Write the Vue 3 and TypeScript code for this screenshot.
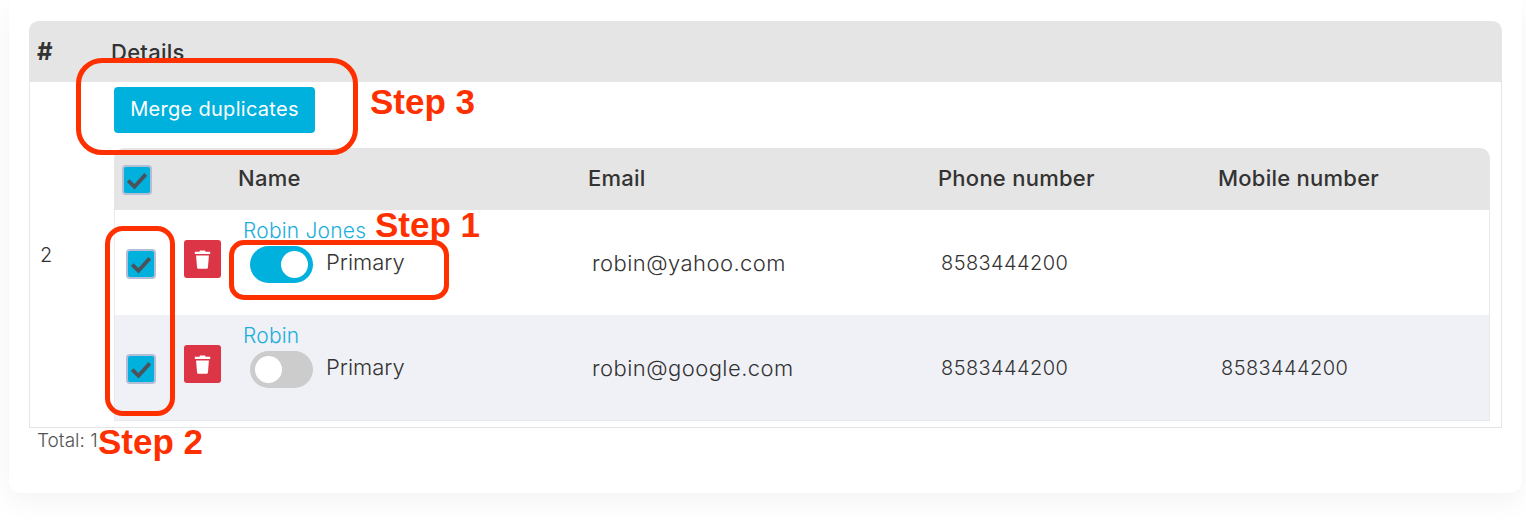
<template>
  <div class="page">
    <div class="card">
      <div class="outer">
        <div class="outer-head">
          <span class="col-no">#</span>
          <span class="col-details">Details</span>
        </div>
        <div class="outer-body">
          <div class="row-no">2</div>
          <div class="details">
            <div class="actions">
              <button class="merge" type="button">Merge duplicates</button>
            </div>
            <div class="inner-head inner-grid">
              <div class="head-check"><span class="check"><svg viewBox="0 0 24 24"><path d="M5 12.500l5 5 9-10" /></svg></span></div>
              <div>Name</div>
              <div>Email</div>
              <div>Phone number</div>
              <div>Mobile number</div>
            </div>
            <div v-for="c in contacts" :key="c.email" class="inner-row inner-grid" :class="{ alt: !c.primary }">
              <div class="row-tools">
                <span class="check"><svg viewBox="0 0 24 24"><path d="M5 12.500l5 5 9-10" /></svg></span>
                <button class="del" type="button" aria-label="Delete">
                  <svg viewBox="0 0 24 24"><path d="M9.500 2.500h5l.8 1.500H20v2.200H4V4h4.700zM5.300 7.700h13.400l-1 12.300c-.1 1-.8 1.600-1.700 1.600H8c-.9 0-1.600-.6-1.700-1.600z" /></svg>
                </button>
              </div>
              <div class="name-cell">
                <a class="name" href="#">{{ c.name }}</a>
                <div class="primary">
                  <span class="toggle" :class="{ on: c.primary }"><i></i></span>
                  <span>Primary</span>
                </div>
              </div>
              <div class="val">{{ c.email }}</div>
              <div class="val num">{{ c.phone }}</div>
              <div class="val num">{{ c.mobile }}</div>
            </div>
          </div>
        </div>
      </div>
      <div class="total">Total: 1</div>
    </div>

    <div class="mark mark-3"></div>
    <div class="mark mark-1"></div>
    <div class="mark mark-2"></div>
    <span class="step step-3">Step 3</span>
    <span class="step step-1">Step 1</span>
    <span class="step step-2">Step 2</span>
  </div>
</template>

<script setup lang="ts">
interface Contact {
  name: string
  email: string
  phone: string
  mobile: string
  primary: boolean
}

const contacts: Contact[] = [
  { name: 'Robin Jones', email: 'robin@yahoo.com', phone: '8583444200', mobile: '', primary: true },
  { name: 'Robin', email: 'robin@google.com', phone: '8583444200', mobile: '8583444200', primary: false },
]
</script>

<style>
html,
body {
  background: #fff;
  overflow: hidden;
}
</style>

<style scoped>
.page {
  position: relative;
  height: 527px;
  overflow: hidden;
  font-family: Inter, "Noto Sans", sans-serif;
  color: #333;
}

.card {
  margin: 0 4px 0 9px;
  height: 493px;
  padding: 21px 20px 0;
  box-sizing: border-box;
  background: #fff;
  border-radius: 0 0 12px 12px;
  box-shadow: 0 8px 28px rgba(0, 0, 0, 0.05);
}

.outer {
  border: 1px solid #e5e5e5;
  border-top: 0;
  border-radius: 10px 10px 0 0;
  height: 407px;
  box-sizing: border-box;
  display: flex;
  flex-direction: column;
}

.outer-head {
  height: 61px;
  margin: 0 -1px;
  background: #e5e5e5;
  border-radius: 10px 10px 0 0;
  display: flex;
  align-items: center;
  font-size: 22px;
  letter-spacing: 0.25px;
  font-weight: 500;
  flex: none;
}

.col-no {
  width: 82px;
  padding-left: 8px;
  box-sizing: border-box;
  font-size: 24px;
  font-weight: 700;
}

.outer-body {
  flex: 1;
  display: flex;
}

.row-no {
  width: 84px;
  flex: none;
  padding-left: 10px;
  box-sizing: border-box;
  align-self: center;
  font-size: 20px;
  font-weight: 300;
}

.details {
  flex: 1;
  margin-right: 11px;
}

.actions {
  height: 66px;
  padding-top: 5px;
  box-sizing: border-box;
}

.merge {
  width: 201px;
  height: 46px;
  border: 0;
  border-radius: 4px;
  background: #00b1dd;
  color: #fff;
  font: 400 20px/44px Inter, "Noto Sans", sans-serif;
  letter-spacing: 0.3px;
  white-space: nowrap;
  padding: 0 0 2px;
}

.inner-grid {
  display: grid;
  grid-template-columns: 124px 350px 350px 280px 1fr;
  align-items: center;
}

.inner-head {
  height: 62px;
  padding-bottom: 2px;
  box-sizing: border-box;
  background: #e5e5e5;
  border-radius: 10px 10px 0 0;
  font-size: 22px;
  letter-spacing: 0.25px;
  font-weight: 500;
}

.head-check {
  padding-left: 8px;
  margin-top: 4px;
  display: flex;
}

.inner-row {
  height: 105px;
  border: 1px solid #e9e9e9;
  border-width: 0 1px;
  box-sizing: border-box;
}

.inner-row.alt {
  height: 106px;
  background: #f0f1f7;
  border-bottom-width: 1px;
}

.check {
  width: 30px;
  height: 30px;
  box-sizing: border-box;
  border: 2px solid #b4bdd6;
  border-radius: 4px;
  background: #00b1dd;
  display: flex;
  align-items: center;
  justify-content: center;
}

.check svg {
  width: 30px;
  height: 30px;
  flex: none;
}

.check path {
  fill: none;
  stroke: #4d5159;
  stroke-width: 3;
}

.row-tools {
  display: flex;
  align-items: center;
  gap: 28px;
  padding-left: 11px;
  margin-top: 2px;
}

.del {
  width: 37px;
  height: 38px;
  margin-top: -9px;
  border: 0;
  border-radius: 3px;
  background: #dc3545;
  padding: 0;
  display: flex;
  align-items: center;
  justify-content: center;
}

.del svg {
  width: 23px;
  height: 23px;
  fill: #fff;
}

.name-cell {
  align-self: start;
  padding: 9px 0 0 4px;
}

.name {
  display: block;
  height: 27px;
  line-height: 24px;
  color: #1eaedb;
  font-size: 21px;
  letter-spacing: 0.2px;
  font-weight: 300;
  text-decoration: none;
}

.primary {
  display: flex;
  align-items: flex-start;
  gap: 13px;
  padding-left: 7px;
  font-size: 22px;
  font-weight: 300;
  line-height: 32px;
}

.toggle {
  width: 63px;
  height: 37px;
  border-radius: 19px;
  background: #ccc;
  position: relative;
  flex: none;
}

.toggle i {
  position: absolute;
  left: 5px;
  top: 5px;
  width: 27px;
  height: 27px;
  border-radius: 50%;
  background: #fff;
}

.toggle.on {
  background: #00b1dd;
}

.toggle.on i {
  left: 31px;
}

.val {
  padding-left: 3px;
  font-size: 22px;
  letter-spacing: 0.45px;
  font-weight: 300;
  margin-top: 1px;
}

.val.num {
  padding-left: 2px;
  font-size: 20px;
  letter-spacing: 0.4px;
}

.total {
  padding: 1px 0 0 8px;
  font-size: 19px;
  font-weight: 300;
  color: #555;
}

.mark {
  position: absolute;
  box-sizing: border-box;
  border: 5px solid #ff3000;
}

.mark-3 {
  left: 76px;
  top: 58px;
  width: 282px;
  height: 97px;
  border-radius: 26px;
}

.mark-1 {
  left: 229px;
  top: 240px;
  width: 220px;
  height: 60px;
  border-radius: 15px;
}

.mark-2 {
  left: 105px;
  top: 226px;
  width: 70px;
  height: 190px;
  border-radius: 18px;
}

.step {
  position: absolute;
  font-family: "Liberation Sans", Arial, sans-serif;
  font-weight: 700;
  font-size: 35px;
  line-height: 38px;
  color: #ff3000;
  white-space: nowrap;
}

.step-3 {
  left: 370px;
  top: 83px;
}

.step-1 {
  left: 375px;
  top: 206px;
}

.step-2 {
  left: 98px;
  top: 423px;
}
</style>
